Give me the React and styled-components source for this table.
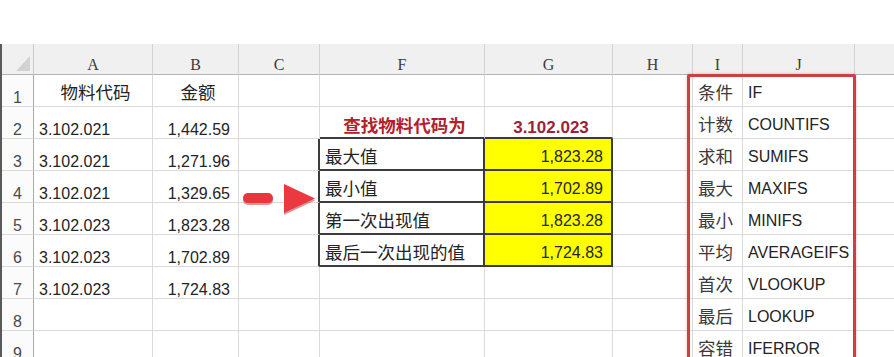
import React from "react";
import styled, { createGlobalStyle } from "styled-components";

const GlobalStyle = createGlobalStyle`
  html, body {
    margin: 0;
    padding: 0;
    background: #ffffff;
  }
  body {
    width: 894px;
    height: 357px;
    overflow: hidden;
    font-family: "Liberation Sans", "Noto Sans CJK SC", sans-serif;
  }
`;

const COLS = [
  { key: "A", width: 119 },
  { key: "B", width: 86 },
  { key: "C", width: 81 },
  { key: "F", width: 165 },
  { key: "G", width: 128 },
  { key: "H", width: 80 },
  { key: "I", width: 50 },
  { key: "J", width: 112 },
  { key: "K", width: 120 },
];

const ROWS = [1, 2, 3, 4, 5, 6, 7, 8, 9];

const codes = ["3.102.021", "3.102.021", "3.102.021", "3.102.023", "3.102.023", "3.102.023"];
const amounts = ["1,442.59", "1,271.96", "1,329.65", "1,823.28", "1,702.89", "1,724.83"];
const lookups = [
  ["最大值", "1,823.28"],
  ["最小值", "1,702.89"],
  ["第一次出现值", "1,823.28"],
  ["最后一次出现的值", "1,724.83"],
];
const funcs = [
  ["条件", "IF"],
  ["计数", "COUNTIFS"],
  ["求和", "SUMIFS"],
  ["最大", "MAXIFS"],
  ["最小", "MINIFS"],
  ["平均", "AVERAGEIFS"],
  ["首次", "VLOOKUP"],
  ["最后", "LOOKUP"],
  ["容错", "IFERROR"],
];

// cell contents keyed like "A1"
const cells = {
  A1: { text: "物料代码", align: "center", cjk: true },
  B1: { text: "金额", align: "center", cjk: true },
  F2: { text: "查找物料代码为", align: "center", cjk: true, tone: "red", shift: 7 },
  G2: { text: "3.102.023", align: "center", tone: "maroon", shift: 11 },
};
codes.forEach((c, i) => {
  cells[`A${i + 2}`] = { text: c, bottom: true };
  cells[`B${i + 2}`] = { text: amounts[i], align: "right", bottom: true };
});
lookups.forEach(([label, value], i) => {
  cells[`F${i + 3}`] = { text: label, cjk: true, shift: 5 };
  cells[`G${i + 3}`] = { text: value, align: "right", fill: "#ffff00", shift: 5 };
});
funcs.forEach(([label, fn], i) => {
  cells[`I${i + 1}`] = { text: label, cjk: true, soft: true };
  cells[`J${i + 1}`] = { text: fn };
});

const isBoxed = (r, c) => r >= 3 && r <= 6 && (c === "F" || c === "G");

const App = () => {
  return (
    <>
      <GlobalStyle />
      <Page>
        <Sheet $cols={COLS.map((c) => `${c.width}px`).join(" ")}>
          <Corner>
            <CornerMark />
          </Corner>
          {COLS.map((c) => (
            <ColHeader key={c.key}>{c.key}</ColHeader>
          ))}
          {ROWS.map((r) => (
            <React.Fragment key={r}>
              <RowHeader>{r}</RowHeader>
              {COLS.map((c, ci) => {
                const cell = cells[`${c.key}${r}`] || {};
                const next = COLS[ci + 1];
                const darkRight = isBoxed(r, c.key) || (next && isBoxed(r, next.key));
                const darkBottom = isBoxed(r, c.key) || isBoxed(r + 1, c.key);
                return (
                  <Cell
                    key={c.key}
                    $align={cell.align}
                    $bottom={cell.bottom}
                    $shift={cell.shift ?? 4}
                    $fill={cell.fill}
                    $darkRight={darkRight}
                    $darkBottom={darkBottom}
                  >
                    {cell.text && (
                      <CellText $cjk={cell.cjk} $tone={cell.tone} $soft={cell.soft}>
                        {cell.text}
                      </CellText>
                    )}
                  </Cell>
                );
              })}
            </React.Fragment>
          ))}
        </Sheet>

        <Arrow width="80" height="40" viewBox="0 0 80 40">
          <rect x="3" y="15" width="30" height="10" rx="5" fill="#a81c26" opacity="0.45" />
          <polygon points="44,6 75,20.5 44,35" fill="#a81c26" opacity="0.45" />
          <rect x="3" y="13" width="30" height="10" rx="5" fill="#e8353e" />
          <polygon points="44,4 75,18.5 44,33" fill="#ea3940" />
        </Arrow>

        <Highlight />
      </Page>
    </>
  );
};

const Page = styled.div`
  position: relative;
  width: 894px;
  height: 357px;
  padding-top: 44px;
  box-sizing: border-box;
  overflow: hidden;
`;

const Sheet = styled.div`
  display: grid;
  grid-template-columns: 32px ${(p) => p.$cols};
  grid-template-rows: 31px repeat(9, 32px);
  border-left: 2px solid #5a5a5a;
  width: max-content;
`;

const Corner = styled.div`
  position: relative;
  background: #f0f0f0;
  border-right: 1px solid #c9c9c9;
  border-bottom: 1px solid #b4b4b4;
  box-sizing: border-box;
`;

const CornerMark = styled.div`
  position: absolute;
  right: 3px;
  bottom: 3px;
  width: 0;
  height: 0;
  border-left: 14px solid transparent;
  border-bottom: 15px solid #d2d2d2;
`;

const ColHeader = styled.div`
  display: flex;
  align-items: flex-end;
  justify-content: center;
  padding-bottom: 1px;
  box-sizing: border-box;
  background: #f0f0f0;
  border-right: 1px solid #d3d3d3;
  border-bottom: 1px solid #b4b4b4;
  font-family: "Liberation Serif", serif;
  font-size: 16px;
  line-height: 16px;
  color: #3c3c3c;
`;

const RowHeader = styled.div`
  display: flex;
  align-items: flex-end;
  justify-content: center;
  padding-bottom: 0;
  box-sizing: border-box;
  background: #fbfbfb;
  border-right: 1px solid #a9a9a9;
  border-bottom: 1px solid #dadada;
  font-size: 16px;
  line-height: 16px;
  color: #4a4a4a;
`;

const Cell = styled.div`
  display: flex;
  align-items: ${(p) => (p.$bottom ? "flex-end" : "center")};
  justify-content: ${(p) =>
    p.$align === "right" ? "flex-end" : p.$align === "center" ? "center" : "flex-start"};
  box-sizing: border-box;
  padding: ${(p) => (p.$bottom ? 0 : p.$shift)}px ${(p) => (p.$align === "right" ? 8 : 0)}px 0 5px;
  background: ${(p) => p.$fill || "#ffffff"};
  border-right: ${(p) => (p.$darkRight ? "2px solid #3b3b3b" : "1px solid #dadada")};
  border-bottom: ${(p) => (p.$darkBottom ? "2px solid #3b3b3b" : "1px solid #dadada")};
  overflow: hidden;
  white-space: nowrap;
`;

const tones = {
  red: "#b3202c",
  maroon: "#9e1f37",
};

const CellText = styled.span`
  font-size: ${(p) => (p.$tone === "maroon" ? 17 : p.$cjk ? 17.5 : 16)}px;
  line-height: 16px;
  font-weight: ${(p) => (p.$tone ? 700 : 400)};
  color: ${(p) => tones[p.$tone] || (p.$soft ? "#3a3a3a" : "#242424")};
`;

const Arrow = styled.svg`
  position: absolute;
  left: 240px;
  top: 180px;
`;

const Highlight = styled.div`
  position: absolute;
  left: 687px;
  top: 74px;
  width: 169px;
  height: 320px;
  box-sizing: border-box;
  border: 3px solid #cf3d47;
  border-radius: 2px;
  box-shadow: 0 0 3px rgba(190, 50, 60, 0.35);
  pointer-events: none;
`;

export default App;
